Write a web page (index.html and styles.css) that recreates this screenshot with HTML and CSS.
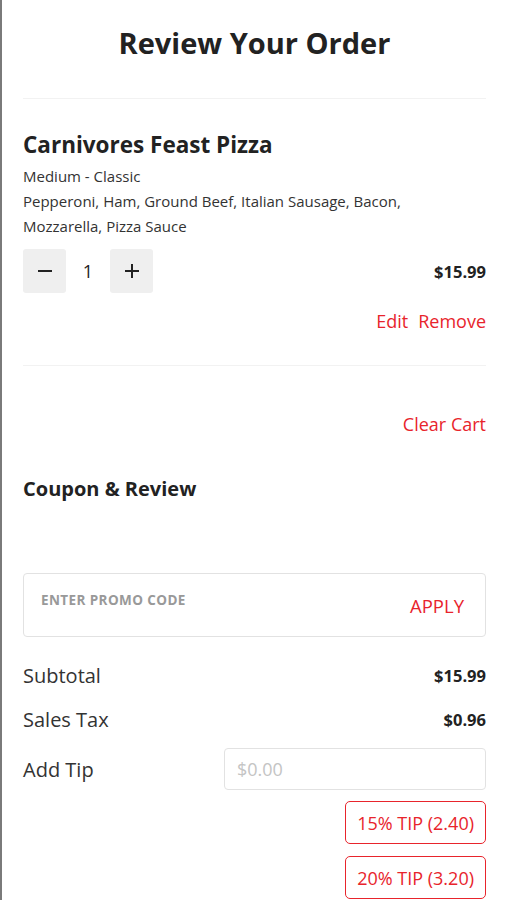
FILE: index.html
```html
<!DOCTYPE html>
<html>

<head>
    <meta charset="UTF-8" />
    <title>
        Review Your Order
    </title>
    <link rel="stylesheet" href="styles.css">
</head>

<body>
    <div class="page">
        <h1 class="title">Review Your Order</h1>
        <div class="divider"></div>

        <div class="item">
            <div class="itemName">Carnivores Feast Pizza</div>
            <div class="itemDetail">Medium - Classic</div>
            <div class="itemDetail">Pepperoni, Ham, Ground Beef, Italian Sausage, Bacon, Mozzarella, Pizza Sauce</div>

            <div class="qtyRow">
                <div class="qty">
                    <div class="qtyButton">
                        <svg width="18" height="18" viewBox="0 0 18 18"><path d="M2 9h14" stroke="#222" stroke-width="2"/></svg>
                    </div>
                    <div class="qtyValue">1</div>
                    <div class="qtyButton">
                        <svg width="18" height="18" viewBox="0 0 18 18"><path d="M2 9h14M9 2v14" stroke="#222" stroke-width="2"/></svg>
                    </div>
                </div>
                <div class="price">$15.99</div>
            </div>

            <div class="itemLinks">
                <span class="link">Edit</span>
                <span class="link">Remove</span>
            </div>
        </div>
        <div class="divider"></div>

        <div class="clearRow"><span class="link">Clear Cart</span></div>

        <div class="sectionTitle">Coupon &amp; Review</div>

        <div class="promo">
            <div class="promoLabel">ENTER PROMO CODE</div>
            <div class="promoApply">APPLY</div>
        </div>

        <div class="summary">
            <div class="summaryRow">
                <div class="summaryLabel">Subtotal</div>
                <div class="summaryValue">$15.99</div>
            </div>
            <div class="summaryRow">
                <div class="summaryLabel">Sales Tax</div>
                <div class="summaryValue">$0.96</div>
            </div>
            <div class="tipRow">
                <div class="summaryLabel">Add Tip</div>
                <input class="tipInput" type="text" placeholder="$0.00">
            </div>
        </div>

        <div class="tipButtons">
            <div class="tipButton">15% TIP (2.40)</div>
            <div class="tipButton">20% TIP (3.20)</div>
        </div>
    </div>
</body>

</html>
```

FILE: styles.css
```css
body {
    margin: 0;
    font-family: "Open Sans", "Liberation Sans", sans-serif;
    color: #222;
    background: white;
}

.page {
    border-left: 2px solid #7a7a7a;
    min-height: 900px;
    padding: 0 21px 0 21px;
    box-sizing: border-box;
}

.title {
    margin: 0;
    padding-top: 24px;
    height: 98px;
    box-sizing: border-box;
    text-align: center;
    font-size: 29px;
    line-height: 38px;
    font-weight: 700;
    color: #222;
}

.divider {
    height: 1px;
    background: #f2f2f2;
}

.item {
    padding-top: 31px;
}

.itemName {
    font-size: 22.5px;
    font-weight: 700;
    line-height: 30px;
    margin-bottom: 4px;
}

.itemDetail {
    font-size: 15px;
    line-height: 25px;
    color: #333;
    padding-right: 60px;
}

.qtyRow {
    display: flex;
    justify-content: space-between;
    align-items: center;
    margin-top: 10px;
}

.qty {
    display: flex;
    align-items: center;
}

.qtyButton {
    width: 43px;
    height: 44px;
    background: #efefef;
    border-radius: 3px;
    display: flex;
    justify-content: center;
    align-items: center;
}

.qtyValue {
    width: 44px;
    text-align: center;
    font-size: 18px;
}

.price {
    font-size: 16.5px;
    font-weight: 700;
}

.itemLinks {
    display: flex;
    justify-content: flex-end;
    gap: 10px;
    margin-top: 16px;
    padding-bottom: 32px;
}

.link {
    color: #e8242c;
    font-size: 18px;
}

.clearRow {
    display: flex;
    justify-content: flex-end;
    padding-top: 46px;
}

.sectionTitle {
    font-size: 20px;
    font-weight: 700;
    margin-top: 39px;
}

.promo {
    margin-top: 71px;
    height: 64px;
    border: 1px solid #e2e2e2;
    border-radius: 4px;
    box-sizing: border-box;
    display: flex;
    justify-content: space-between;
    padding: 17px 21px 0 17px;
}

.promoLabel {
    font-size: 13.5px;
    font-weight: 700;
    color: #999;
    letter-spacing: 0.4px;
}

.promoApply {
    color: #e8242c;
    font-size: 18.5px;
    padding-top: 2px;
}

.summary {
    margin-top: 16px;
}

.summaryRow {
    display: flex;
    justify-content: space-between;
    align-items: center;
    height: 44px;
}

.summaryLabel {
    font-size: 20px;
    color: #333;
}

.summaryValue {
    font-size: 16.5px;
    font-weight: 700;
}

.tipRow {
    display: flex;
    justify-content: space-between;
    align-items: center;
    margin-top: 7px;
}

.tipInput {
    width: 262px;
    height: 42px;
    box-sizing: border-box;
    border: 1px solid #e2e2e2;
    border-radius: 4px;
    padding: 0 12px;
    font-family: inherit;
    font-size: 18px;
    outline: none;
}

.tipInput::placeholder {
    color: #c4c4c4;
}

.tipButtons {
    display: flex;
    flex-direction: column;
    align-items: flex-end;
    gap: 12px;
    margin-top: 11px;
}

.tipButton {
    border: 1.5px solid #e8242c;
    border-radius: 5px;
    color: #e8242c;
    font-size: 18px;
    height: 43px;
    box-sizing: border-box;
    display: flex;
    align-items: center;
    padding: 0 11px;
}
```
